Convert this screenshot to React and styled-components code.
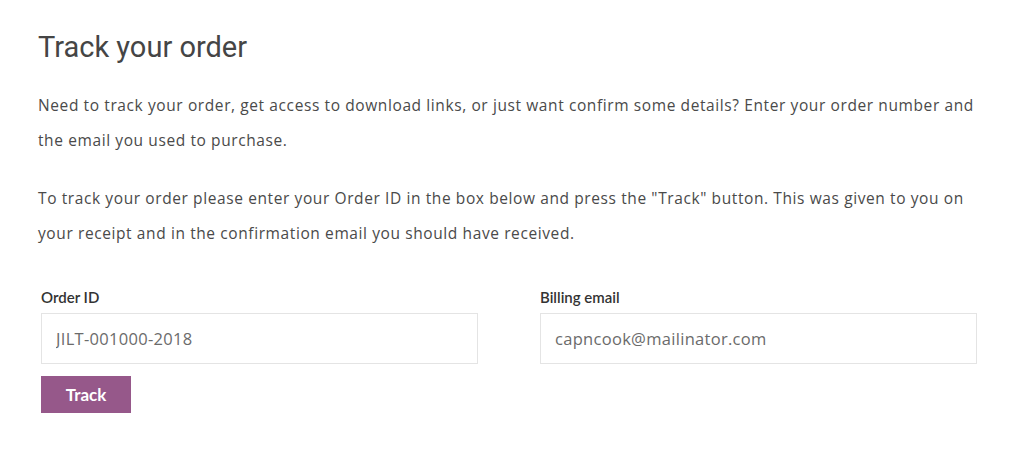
import React from 'react'
import styled, { createGlobalStyle } from 'styled-components'

const GlobalStyle = createGlobalStyle`
    body{
        margin: 0;
        background: #fff;
        font-family: "Open Sans", "Liberation Sans", sans-serif;
    }
`

const Page = styled.div`
    padding: 28px 38px 0 38px;
    width: 1024px;
    box-sizing: border-box;
    h1{
        margin: 0;
        font-family: Roboto, "Liberation Sans", sans-serif;
        font-weight: 400;
        font-size: 29px;
        line-height: 38px;
        color: #454545;
    }
`

const Text = styled.p`
    margin: ${p => p.first ? '22px' : '24px'} 0 0 0;
    font-size: 15.5px;
    line-height: 34.5px;
    color: #4a4a4a;
    width: 945px;
    letter-spacing: 0.6px;
`

const Form = styled.form`
    margin: 38px 0 0 3px;
    width: 936px;
`

const Row = styled.div`
    display: grid;
    grid-template-columns: 437px 437px;
    column-gap: 62px;
`

const Field = styled.div`
    display: flex;
    flex-direction: column;
    label{
        font-family: Lato, "Liberation Sans", sans-serif;
        font-size: 15px;
        font-weight: 600;
        color: #333;
        line-height: 18px;
        margin-bottom: 7px;
    }
`

const Input = styled.input`
    height: 51px;
    box-sizing: border-box;
    border: 1px solid #e4e4e4;
    padding: 0 14px;
    font-family: "Open Sans", "Liberation Sans", sans-serif;
    font-size: 16.5px;
    letter-spacing: 0.3px;
    color: #6b6b6b;
    outline: none;
    background: #fff;
`

const Button = styled.button`
    margin-top: 12px;
    width: 90px;
    height: 37px;
    border: none;
    background: #96588a;
    color: #fff;
    font-family: Lato, "Liberation Sans", sans-serif;
    font-weight: 700;
    font-size: 17px;
    padding: 0;
    cursor: pointer;
`

const App = () => (
    <Page>
        <GlobalStyle />
        <h1>Track your order</h1>
        <Text first>
            Need to track your order, get access to download links, or just want confirm some details? Enter your order number and the email you used to purchase.
        </Text>
        <Text>
            To track your order please enter your Order ID in the box below and press the "Track" button. This was given to you on your receipt and in the confirmation email you should have received.
        </Text>
        <Form onSubmit={e => e.preventDefault()}>
            <Row>
                <Field>
                    <label>Order ID</label>
                    <Input defaultValue="JILT-001000-2018" />
                </Field>
                <Field>
                    <label>Billing email</label>
                    <Input defaultValue="capncook@mailinator.com" />
                </Field>
            </Row>
            <Button type="submit">Track</Button>
        </Form>
    </Page>
)

export default App
